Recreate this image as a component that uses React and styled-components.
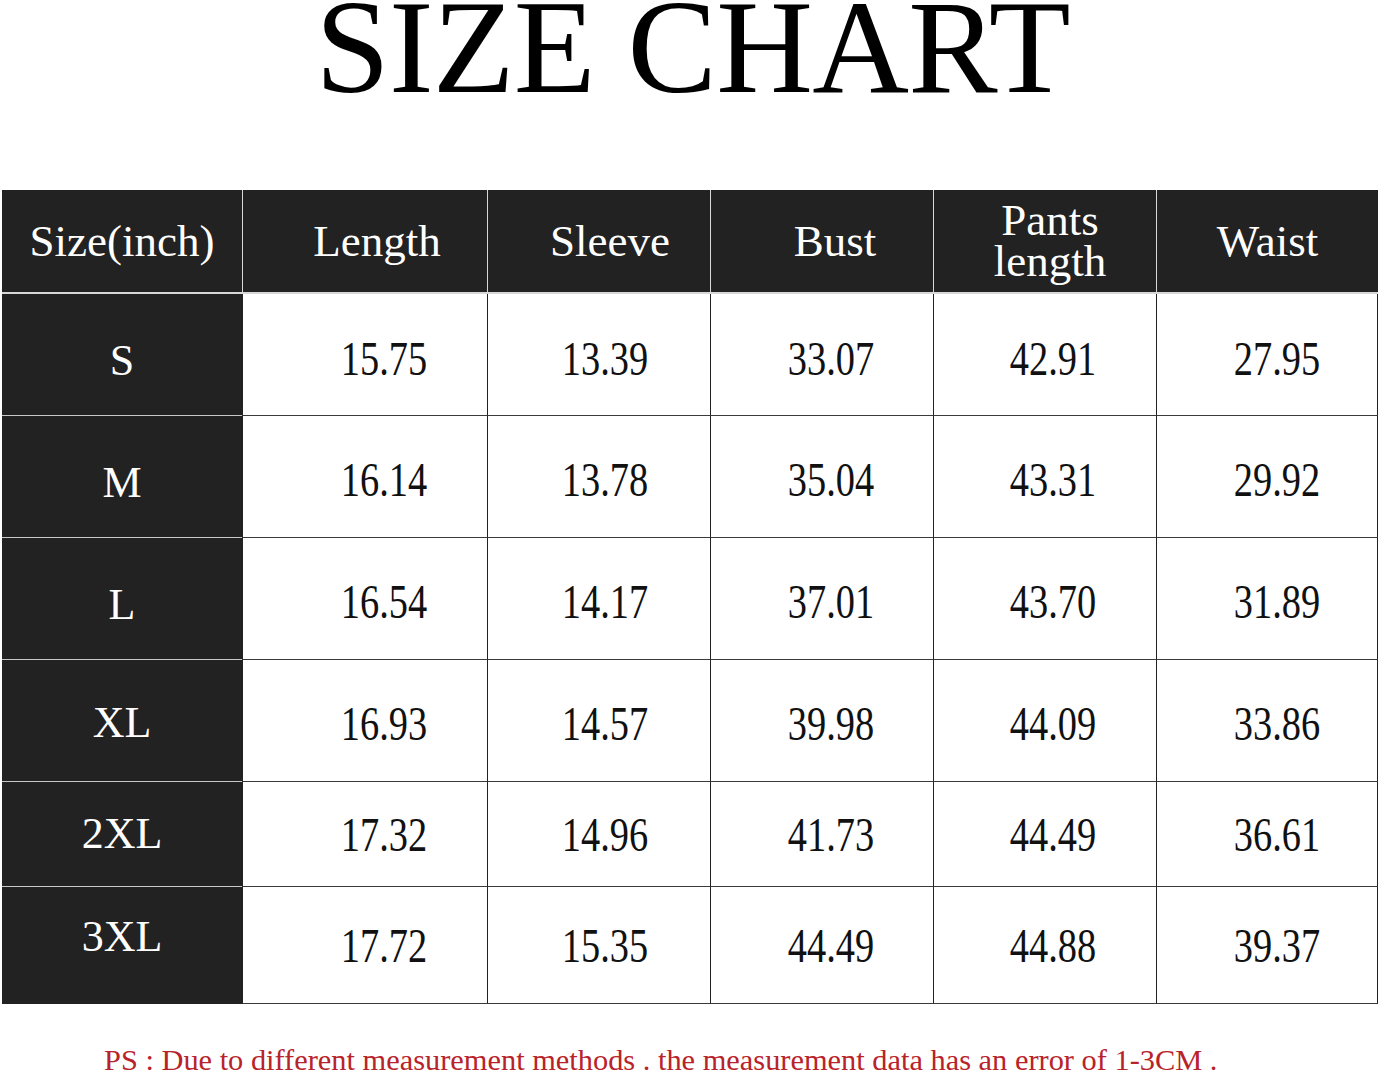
import React from 'react';
import styled, { createGlobalStyle } from 'styled-components';

const GlobalStyle = createGlobalStyle`
    html, body {
        margin: 0;
        padding: 0;
        background: #fff;
    }
    body {
        font-family: "Liberation Serif", "Times New Roman", serif;
        color: #000;
    }
`;

const Page = styled('div')`
    width: 1381px;
    height: 1075px;
    overflow: hidden;
    background: #fff;
`;

const TitleBar = styled('header')`
    height: 190px;
    display: flex;
    justify-content: center;
    align-items: flex-start;
`;

const Title = styled('h1')`
    margin: 0 0 0 4px;
    font-size: 134px;
    line-height: 94px;
    font-weight: 400;
    letter-spacing: -0.8px;
    white-space: nowrap;
`;

const Grid = styled('div')`
    margin: 0 3px 0 2px;
    display: grid;
    grid-template-columns: 240px 245px 223px 223px 223px 222px;
    grid-template-rows: 104px 122px 122px 122px 122px 105px 117px;
`;

const HeadCell = styled('div')`
    background: #222;
    color: #fff;
    display: flex;
    flex-direction: column;
    align-items: center;
    justify-content: center;
    padding-left: ${p => p.shift || 0}px;
    font-size: 45px;
    line-height: 41px;
    border-left: ${p => p.first ? 'none' : '1px solid #d8d8d8'};
    border-bottom: 2px solid #d8d8d8;
    white-space: nowrap;
`;

const SizeCell = styled('div')`
    background: #222;
    color: #fff;
    display: flex;
    align-items: center;
    justify-content: center;
    font-size: 44px;
    padding-top: ${p => p.drop || 0}px;
    padding-bottom: ${p => p.lift || 0}px;
    border-bottom: ${p => p.last ? 'none' : '1.5px solid #c8c8c8'};
`;

const DataCell = styled('div')`
    background: #fff;
    display: flex;
    align-items: center;
    justify-content: center;
    padding-left: ${p => p.shift || 0}px;
    padding-top: ${p => p.drop || 0}px;
    border-left: 1.5px solid #222;
    border-right: ${p => p.end ? '1.5px solid #222' : 'none'};
    border-bottom: 1.5px solid #3a3a3a;
`;

const Num = styled('span')`
    display: inline-block;
    font-size: 48px;
    line-height: 1;
    color: #111;
    transform: scaleX(0.8);
`;

const Note = styled('p')`
    margin: 43px 0 0;
    padding-left: 104px;
    font-size: 30.4px;
    line-height: 26px;
    color: #b8232a;
    white-space: nowrap;
`;

const headers = [
    { label: ['Size(inch)'], shift: -4 },
    { label: ['Length'], shift: 24 },
    { label: ['Sleeve'], shift: 22 },
    { label: ['Bust'], shift: 26 },
    { label: ['Pants', 'length'], shift: 10 },
    { label: ['Waist'], shift: -28 },
];

const shifts = [38, 12, 18, 16, 20];

const rows = [
    { size: 'S', top: 12, drop: 8, values: ['15.75', '13.39', '33.07', '42.91', '27.95'] },
    { size: 'M', top: 12, drop: 6, values: ['16.14', '13.78', '35.04', '43.31', '29.92'] },
    { size: 'L', top: 12, drop: 6, values: ['16.54', '14.17', '37.01', '43.70', '31.89'] },
    { size: 'XL', top: 4, drop: 6, values: ['16.93', '14.57', '39.98', '44.09', '33.86'] },
    { size: '2XL', top: 0, lift: 2, drop: 2, values: ['17.32', '14.96', '41.73', '44.49', '36.61'] },
    { size: '3XL', top: 0, lift: 18, drop: 2, values: ['17.72', '15.35', '44.49', '44.88', '39.37'] },
];

export default function App() {
    return (
        <Page>
            <GlobalStyle />
            <TitleBar>
                <Title>SIZE CHART</Title>
            </TitleBar>
            <Grid>
                {headers.map((h, i) => (
                    <HeadCell key={i} first={i === 0} shift={h.shift}>
                        {h.label.map(l => <span key={l}>{l}</span>)}
                    </HeadCell>
                ))}
                {rows.map((r, ri) => (
                    <React.Fragment key={r.size}>
                        <SizeCell drop={r.top} lift={r.lift} last={ri === rows.length - 1}>{r.size}</SizeCell>
                        {r.values.map((v, i) => (
                            <DataCell key={i} shift={shifts[i]} drop={r.drop} end={i === 4}>
                                <Num>{v}</Num>
                            </DataCell>
                        ))}
                    </React.Fragment>
                ))}
            </Grid>
            <Note>PS : Due to different measurement methods . the measurement data has an error of 1-3CM .</Note>
        </Page>
    );
}
